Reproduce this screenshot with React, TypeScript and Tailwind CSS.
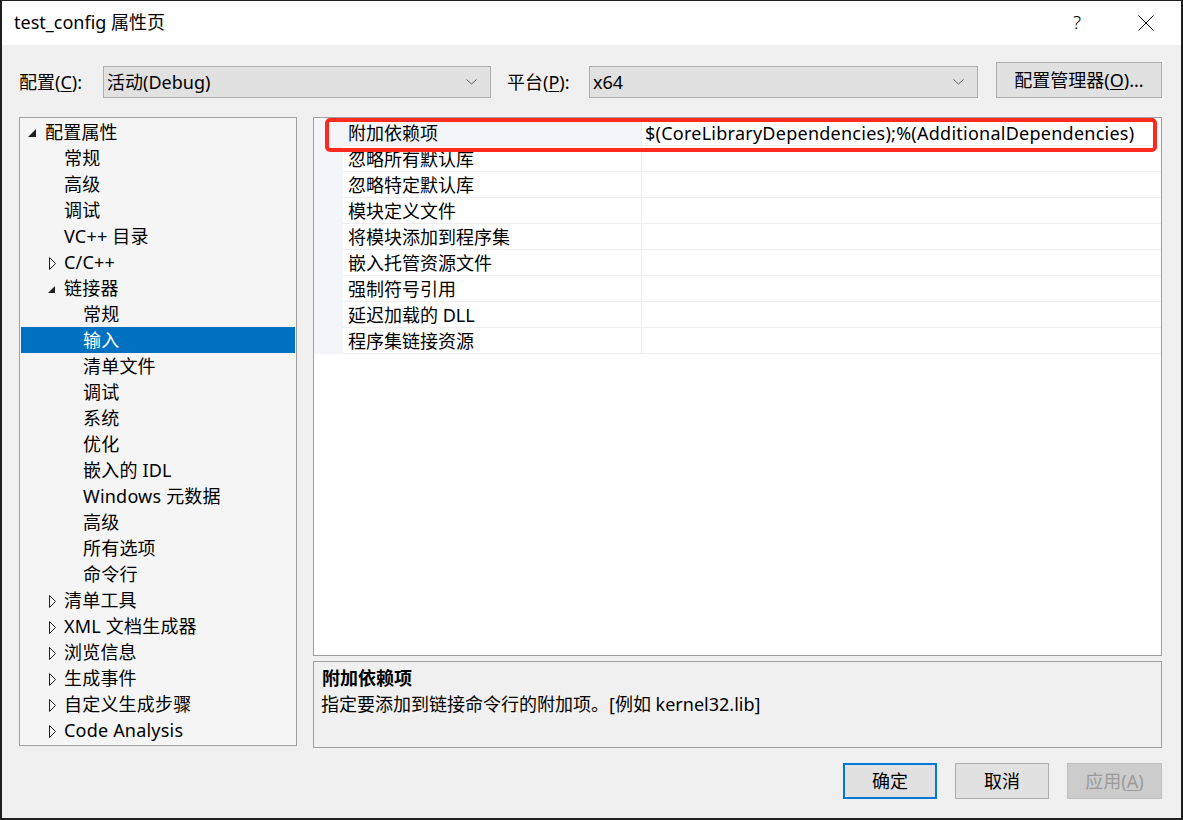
import React from 'react';

type TreeItem = { label: string; level: 0 | 1 | 2; icon?: 'open' | 'closed'; selected?: boolean };

const TREE: TreeItem[] = [
  { label: '配置属性', level: 0, icon: 'open' },
  { label: '常规', level: 1 },
  { label: '高级', level: 1 },
  { label: '调试', level: 1 },
  { label: 'VC++ 目录', level: 1 },
  { label: 'C/C++', level: 1, icon: 'closed' },
  { label: '链接器', level: 1, icon: 'open' },
  { label: '常规', level: 2 },
  { label: '输入', level: 2, selected: true },
  { label: '清单文件', level: 2 },
  { label: '调试', level: 2 },
  { label: '系统', level: 2 },
  { label: '优化', level: 2 },
  { label: '嵌入的 IDL', level: 2 },
  { label: 'Windows 元数据', level: 2 },
  { label: '高级', level: 2 },
  { label: '所有选项', level: 2 },
  { label: '命令行', level: 2 },
  { label: '清单工具', level: 1, icon: 'closed' },
  { label: 'XML 文档生成器', level: 1, icon: 'closed' },
  { label: '浏览信息', level: 1, icon: 'closed' },
  { label: '生成事件', level: 1, icon: 'closed' },
  { label: '自定义生成步骤', level: 1, icon: 'closed' },
  { label: 'Code Analysis', level: 1, icon: 'closed' },
];

const PROPS = [
  { name: '附加依赖项', value: '$(CoreLibraryDependencies);%(AdditionalDependencies)' },
  { name: '忽略所有默认库', value: '' },
  { name: '忽略特定默认库', value: '' },
  { name: '模块定义文件', value: '' },
  { name: '将模块添加到程序集', value: '' },
  { name: '嵌入托管资源文件', value: '' },
  { name: '强制符号引用', value: '' },
  { name: '延迟加载的 DLL', value: '' },
  { name: '程序集链接资源', value: '' },
];

const LEVEL_PAD = ['pl-[5px]', 'pl-[24px]', 'pl-[43px]'];

const Chevron = () => (
  <svg width="11" height="6" viewBox="0 0 11 6" className="mr-[13px]">
    <path d="M0.5 0.5 L5.5 5 L10.5 0.5" fill="none" stroke="#606060" strokeWidth="1" />
  </svg>
);

const TreeIcon = ({ kind, level }: { kind?: 'open' | 'closed'; level: number }) => (
  <svg width="19" height="26" viewBox="0 0 19 26" className="shrink-0">
    {kind === 'open' && (
      <polygon points={level === 0 ? '10,10 10,18 2,18' : '10,11 10,18 3,18'} fill="#1e1e1e" />
    )}
    {kind === 'closed' && (
      <path d="M4.5 8.5 L10.5 14.5 L4.5 20.5 Z" fill="none" stroke="#1e1e1e" strokeWidth="1" />
    )}
  </svg>
);

export default function App() {
  return (
    <div className="w-[1183px] h-[820px] bg-[#1f1f1f] pt-[1px] pl-[2px] overflow-hidden font-['Noto_Sans','Noto_Sans_CJK_SC',sans-serif] text-[18px] text-black">
      <div className="w-[1179px] h-[817px] bg-[#f0f0f0] flex flex-col">
        {/* title bar */}
        <div className="h-[44px] bg-white flex items-center pl-[12px] shrink-0">
          <span className="leading-none -mt-[2px]">test_config 属性页</span>
          <span className="ml-auto font-light text-[19px] leading-none -mt-[2px]">?</span>
          <svg width="16" height="16" viewBox="0 0 16 16" className="ml-[57px] mr-[27px]">
            <path d="M0.5 0.5 L15.5 15.5 M15.5 0.5 L0.5 15.5" stroke="#000" strokeWidth="1" />
          </svg>
        </div>

        {/* config row */}
        <div className="flex items-end mt-[17px] pl-[17px] pr-[19px]">
          <div className="w-[84px] h-[32px] flex items-center">
            配置(<u className="underline-offset-2">C</u>):
          </div>
          <div className="w-[388px] h-[32px] bg-[#e1e1e1] border border-[#adadad] flex items-center pl-[3px]">
            <span>活动(Debug)</span>
            <span className="ml-auto"><Chevron /></span>
          </div>
          <div className="ml-[16px] w-[82px] h-[32px] flex items-center">
            平台(<u className="underline-offset-2">P</u>):
          </div>
          <div className="w-[389px] h-[32px] bg-[#e1e1e1] border border-[#adadad] flex items-center pl-[3px]">
            <span>x64</span>
            <span className="ml-auto"><Chevron /></span>
          </div>
          <div className="ml-[18px] w-[166px] h-[36px] bg-[#e1e1e1] border border-[#adadad] flex items-center justify-center">
            配置管理器(<u className="underline-offset-2">O</u>)...
          </div>
        </div>

        {/* main area */}
        <div className="flex mt-[19px] pl-[17px] pr-[19px] h-[631px]">
          <div className="w-[278px] h-[629px] bg-[#f5f5f5] border border-[#a0a0a0] px-[1px] pt-[1px]">
            {TREE.map((item, i) => (
              <div
                key={i}
                className={`h-[26px] flex items-center ${LEVEL_PAD[item.level]} ${item.selected ? 'bg-[#0070c0] text-white' : ''}`}
              >
                <TreeIcon kind={item.icon} level={item.level} />
                <span className="whitespace-nowrap leading-none tracking-[0.2px]">{item.label}</span>
              </div>
            ))}
          </div>

          <div className="ml-[16px] w-[849px] flex flex-col">
            <div className="relative h-[539px] bg-white border border-[#a0a0a0] pt-[2px]">
              {PROPS.map((p, i) => (
                <div key={i} className="h-[26px] flex">
                  <div className="w-[29px] bg-[#f3f5f9] shrink-0" />
                  <div className={`w-[299px] shrink-0 flex items-center pl-[5px] border-b border-r border-[#eeeeee] ${i === 0 ? 'bg-[#f3f5f9]' : ''}`}>
                    <span className="whitespace-nowrap leading-none">{p.name}</span>
                  </div>
                  <div className="flex-1 flex items-center pl-[3px] border-b border-[#eeeeee]">
                    <span className="whitespace-nowrap leading-none tracking-[0.25px]">{p.value}</span>
                  </div>
                </div>
              ))}
              <div className="absolute left-[11px] top-0 w-[832px] h-[34px] border-[4px] border-[#ff2a1f] rounded-[5px]" />
            </div>
            <div className="mt-[5px] h-[87px] bg-[#f0f0f0] border border-[#a0a0a0] pl-[8px] pt-[3px]">
              <div className="h-[26px] flex items-center font-bold">附加依赖项</div>
              <div className="h-[26px] flex items-center -ml-[1px]">指定要添加到链接命令行的附加项。[例如 kernel32.lib]</div>
            </div>
          </div>
        </div>

        {/* buttons */}
        <div className="flex justify-end mt-[15px] pr-[19px] gap-[18px]">
          <div className="w-[94px] h-[36px] bg-[#e1e1e1] border-2 border-[#0078d7] flex items-center justify-center">确定</div>
          <div className="w-[94px] h-[36px] bg-[#e1e1e1] border border-[#adadad] flex items-center justify-center">取消</div>
          <div className="w-[95px] h-[36px] bg-[#cccccc] border border-[#bfbfbf] flex items-center justify-center text-[#9a9a9a]">
            应用(<u className="underline-offset-2">A</u>)
          </div>
        </div>
      </div>
    </div>
  );
}
